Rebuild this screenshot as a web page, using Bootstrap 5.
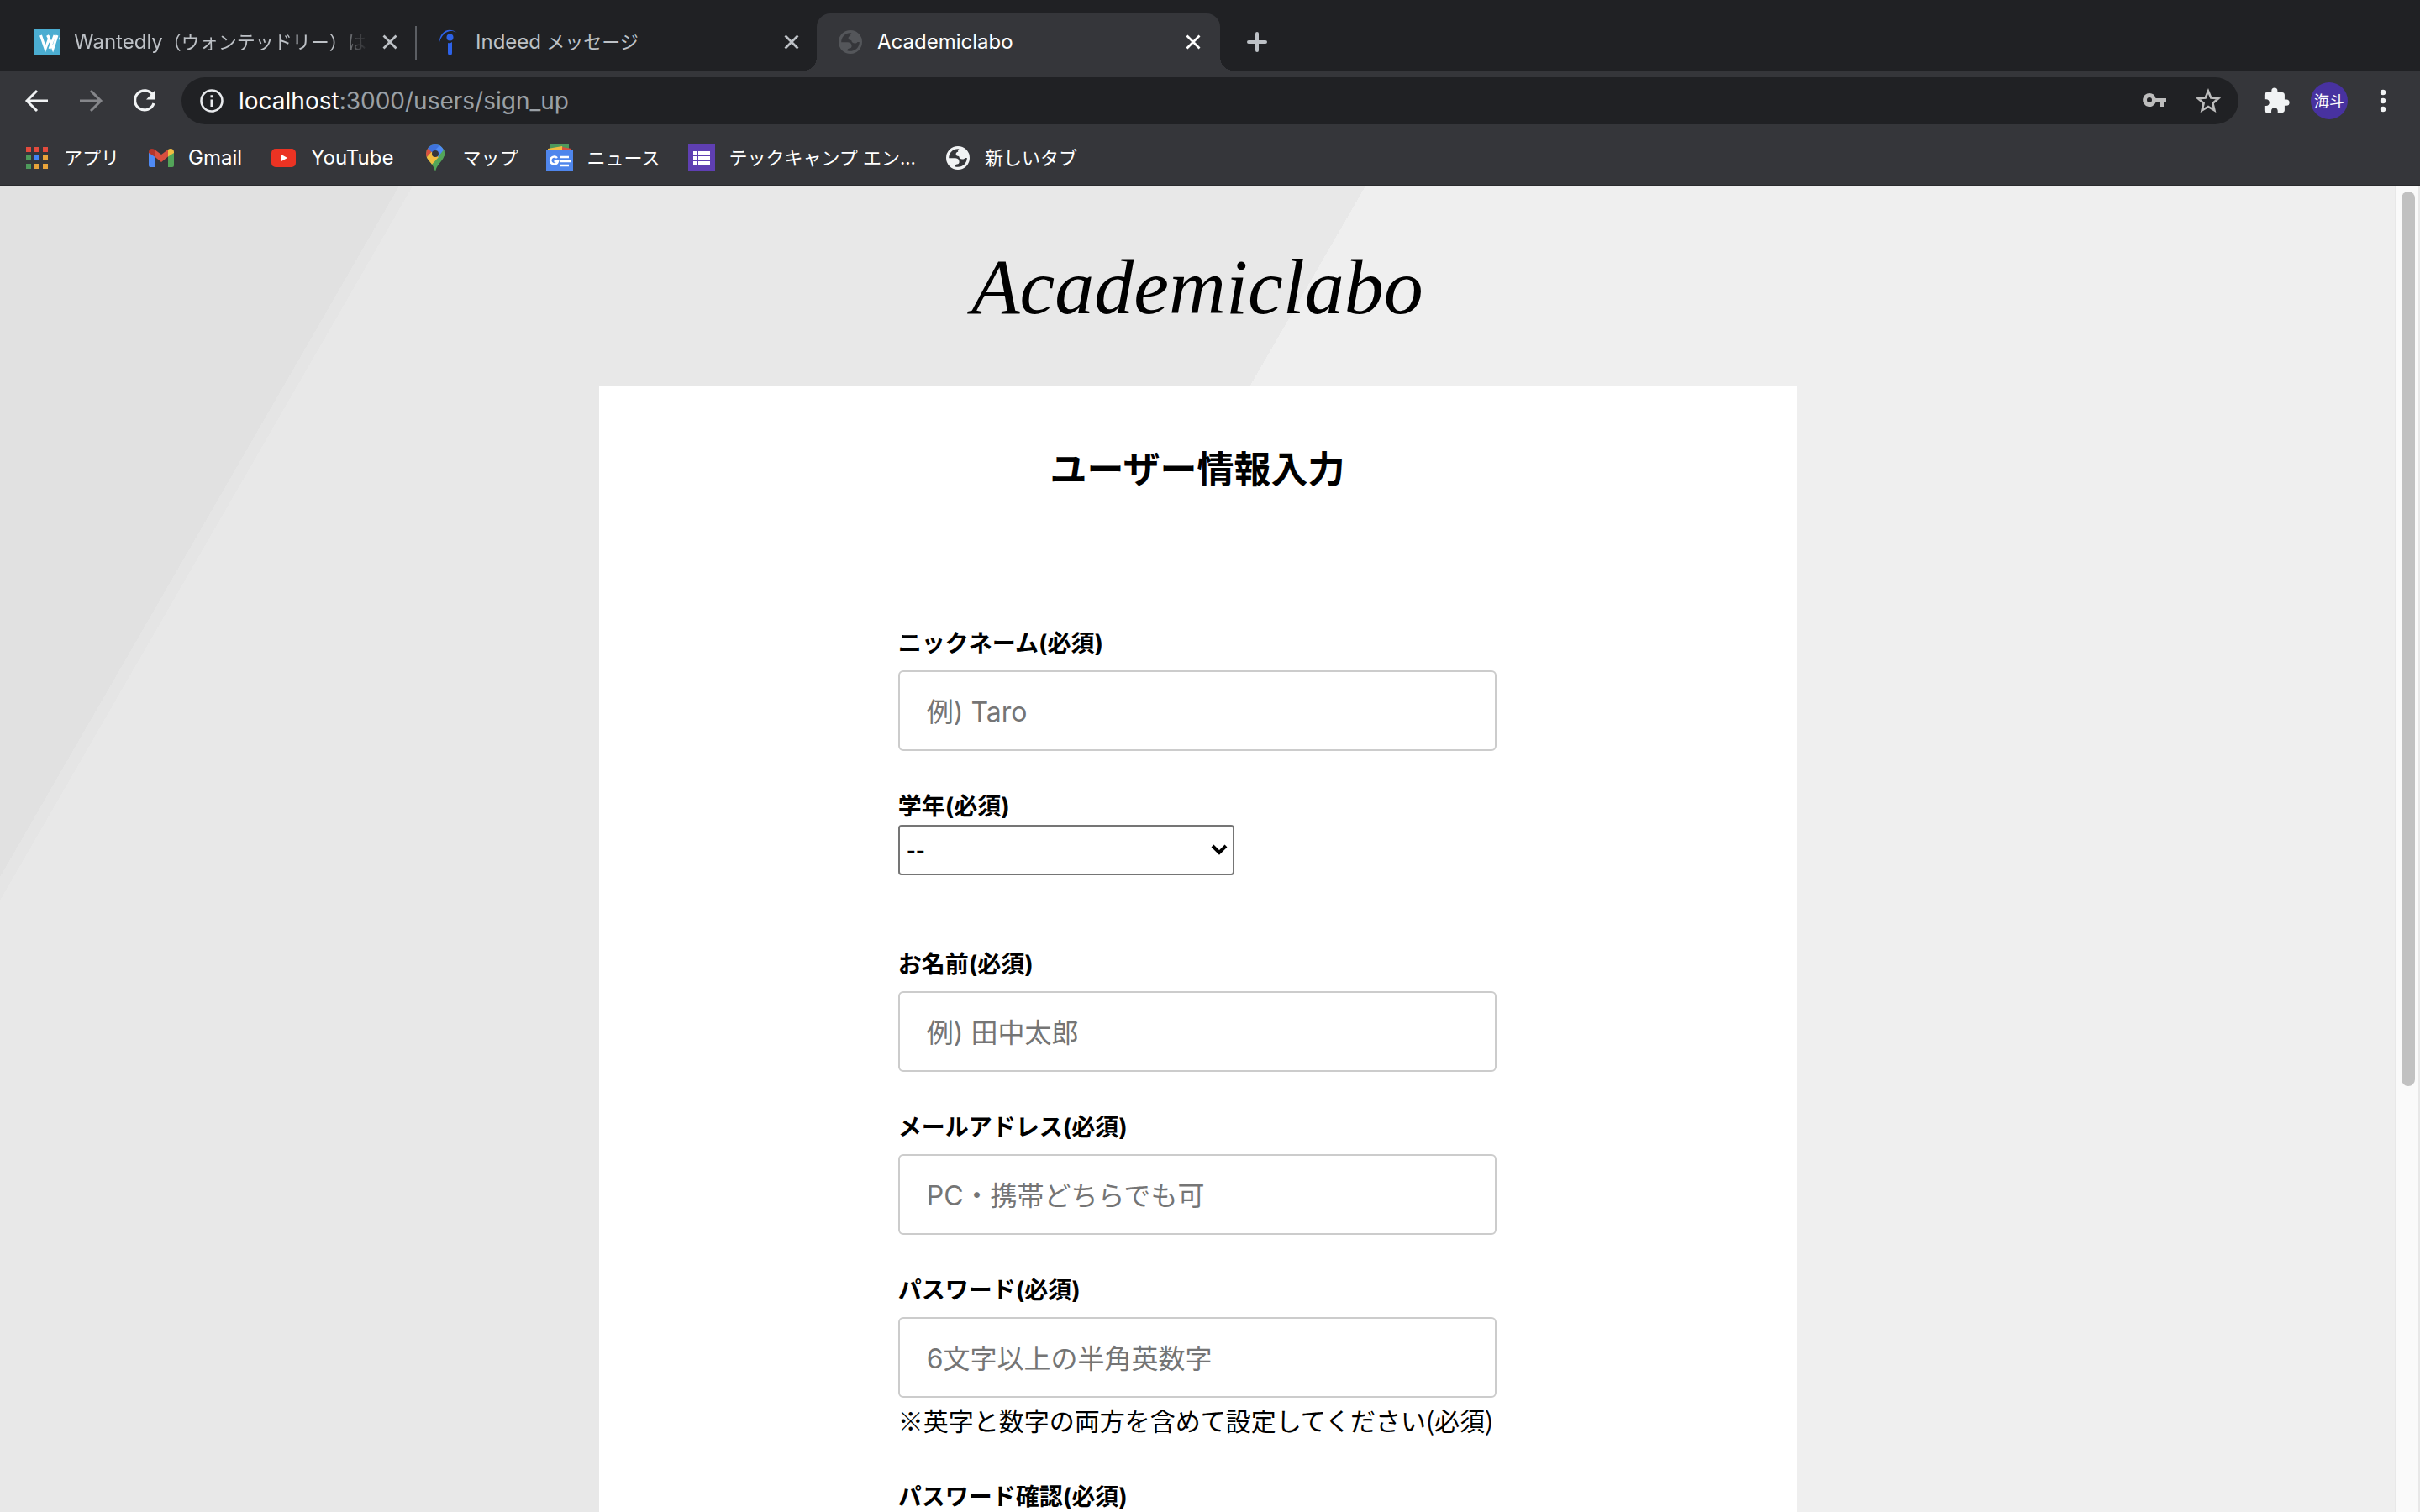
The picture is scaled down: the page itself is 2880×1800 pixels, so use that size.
<!DOCTYPE html>
<html lang="ja">
<head>
<meta charset="utf-8">
<meta name="viewport" content="width=device-width, initial-scale=1">
<title>Academiclabo</title>
<link href="https://cdn.jsdelivr.net/npm/bootstrap@5.3.0/dist/css/bootstrap.min.css" rel="stylesheet">
<style>
  :root { --strip: #202124; --bar: #35363a; --ui: #f1f3f4; --dim: #bdc1c6; }
  body { font-family: Inter, "Noto Sans CJK JP", sans-serif; color: #000; background: #efefef; }
  svg { display: block; flex: none; }
  button { font-family: inherit; }
  .plain-btn { background: none; border: 0; padding: 0; color: inherit; display: flex; align-items: center; justify-content: center; }
  .latin { font-size: 24px; }

  /* tab strip */
  .tab-strip { background: var(--strip); height: 84px; padding: 16px 14px 0; }
  .tab-item { width: 478px; padding: 0 18px 0 26px; gap: 16px; color: var(--dim); font-size: 22px; position: relative; }
  .tab-label { flex: 1; min-width: 0; overflow: hidden; white-space: nowrap; }
  .tab-fade { -webkit-mask-image: linear-gradient(90deg, #000 88%, transparent); mask-image: linear-gradient(90deg, #000 88%, transparent); }
  .tab-split::after { content: ""; position: absolute; right: -4px; top: 15px; width: 2px; height: 40px; background: #5b5e63; }
  .tab-active { width: 480px; margin-left: 2px; padding: 0 22px 0 24px; background: var(--bar); color: #fff; border-radius: 16px 16px 0 0; }
  .tab-active::before, .tab-active::after { content: ""; position: absolute; bottom: 0; width: 16px; height: 16px; }
  .tab-active::before { left: -16px; background: radial-gradient(circle at 0 0, transparent 16px, var(--bar) 16px); }
  .tab-active::after { right: -16px; background: radial-gradient(circle at 100% 0, transparent 16px, var(--bar) 16px); }
  .new-tab { width: 56px; margin-left: 16px; color: var(--dim); }

  /* toolbar */
  .tool-row { background: var(--bar); height: 72px; padding: 0 26px 0 28px; color: var(--ui); }
  .tool-nav { gap: 32px; }
  .url-box { background: var(--strip); height: 56px; border-radius: 28px; margin: 0 28px; padding: 0 20px 0 22px; gap: 18px; }
  .url-text { font-size: 28px; color: #9aa0a6; }
  .url-text b { font-weight: 400; color: #fff; }
  .url-tools { gap: 32px; color: #bdbdbd; }
  .avatar { width: 44px; height: 44px; border-radius: 50%; background: #4832a0; color: #fff; font-size: 18px; }

  /* bookmarks */
  .mark-row { background: var(--bar); height: 66px; padding: 0 28px; gap: 34px; border-bottom: 2px solid #292a2d; }
  .mark-link { color: #fff; font-size: 22px; gap: 16px; text-decoration: none; white-space: nowrap; }

  /* page */
  .page-area { background: linear-gradient(120deg, #e1e1e1 411px, #e5e5e5 411px 425px, #e8e8e8 425px 1407px, #efefef 1407px); }
  .brand-name { font-family: "Liberation Serif", serif; font-style: italic; font-size: 94px; line-height: 238px; margin: 0; text-align: center; }
  .brand-name a { color: #000; text-decoration: none; }
  .form-sheet { width: 50%; background: #fff; padding-top: 66px; }
  .form-title { font-size: 44px; font-weight: 700; line-height: 66px; margin: 0 0 154px; text-align: center; }
  .form-body { width: 50%; }
  .entry { margin-bottom: 46px; }
  .entry-label { display: block; font-size: 28px; font-weight: 700; line-height: 40px; margin-bottom: 12px; }
  .entry-input { display: block; width: 100%; height: 96px; border: 2px solid #ccc; border-radius: 6px; background: #fff; font-size: 32px; padding: 3px 32px 0; color: #000; box-shadow: none; }
  .entry-input::placeholder { color: #757575; opacity: 1; }
  .entry-select-wrap { margin-bottom: 86px; }
  .entry-select-wrap .entry-label { margin-bottom: 2px; }
  .entry-select { display: block; width: 400px; max-width: 100%; height: 60px; border: 2px solid #757575; border-radius: 4px; font-size: 24px; font-weight: 500; padding: 2px 8px 0; color: #000; appearance: none;
    background: #fff url("data:image/svg+xml,%3Csvg xmlns='http://www.w3.org/2000/svg' width='20' height='14'%3E%3Cpath d='M2 2l8 8 8-8' fill='none' stroke='%23000' stroke-width='4'/%3E%3C/svg%3E") no-repeat right 6px center; }
  .entry-note { font-family: "Noto Sans CJK JP", sans-serif; font-size: 30px; line-height: 52px; margin: 0; white-space: nowrap; }

  .scroll-track { width: 30px; background: #fafafa; border-left: 2px solid #e8e8e8; border-right: 2px solid #e8e8e8; padding: 6px 4px 6px 6px; }
  .scroll-thumb { height: 68%; background: #c1c1c1; border-radius: 8px; }
</style>
</head>
<body class="vh-100 d-flex flex-column overflow-hidden">
<svg width="0" height="0" class="position-absolute" aria-hidden="true">
  <symbol id="i-close" viewBox="0 0 20 20"><path d="M2.500 2.500l15 15M17.500 2.500l-15 15" stroke="currentColor" stroke-width="2.800" fill="none"/></symbol>
  <symbol id="i-globe" viewBox="0 0 28 28"><path fill="currentColor" fill-rule="evenodd" d="M14 0a14 14 0 1 0 0 28a14 14 0 0 0 0-28zM15.500 3.500c-1.300.8-1.600 2-1.300 3.200-1.800.3-2.600 1.300-2.600 2.600 0 1.800 1.200 2.700 3.600 2.800.3 2.200 1.600 3.400 4 3.400 1.600 0 2.600-.5 3.300-1.500h2.300c0 6-4.800 10.800-10.800 10.800-1.400 0-2.500-.2-3.700-.6.2-1.800 1.200-2.500 2.700-2.600 1.700-.2 2.600-1.200 2.600-2.800 0-2.600-1.500-4.300-4.600-4.500H3.200C3.200 8 8 3.200 14 3.200z"/></symbol>
</svg>

<header>
  <div class="tab-strip d-flex">
    <div class="tab-item tab-split d-flex align-items-center">
      <svg width="32" height="32" viewBox="0 0 32 32"><path fill="#4badd1" d="M0 0h32v32H0z"/><path d="M8.500 8l5.500 16 4.500-12 4.500 12L28 8M16.500 8l2 4M25 8l-6 16" stroke="#fff" stroke-width="3" fill="none"/><path d="M32 8v8l-2-4z" fill="#fff"/></svg>
      <span class="tab-label tab-fade"><span class="latin">Wantedly</span>（ウォンテッドリー）は</span>
      <button class="plain-btn" type="button" aria-label="閉じる"><svg width="20" height="20"><use href="#i-close"/></svg></button>
    </div>
    <div class="tab-item d-flex align-items-center">
      <svg width="32" height="32" viewBox="0 0 32 32"><path d="M5 16C5 5 15-3 26 5 16 0 9 5 5 16z" fill="#2d62e8"/><circle cx="17.500" cy="10.500" r="4" fill="#2d62e8"/><path d="M15 17q2.500 1 5-1v13a2.500 2.500 0 0 1-5 0z" fill="#2d62e8"/></svg>
      <span class="tab-label"><span class="latin">Indeed</span> メッセージ</span>
      <button class="plain-btn" type="button" aria-label="閉じる"><svg width="20" height="20"><use href="#i-close"/></svg></button>
    </div>
    <div class="tab-item tab-active d-flex align-items-center">
      <svg width="32" height="28" color="#54565a"><use href="#i-globe"/></svg>
      <span class="tab-label"><span class="latin">Academiclabo</span></span>
      <button class="plain-btn" type="button" aria-label="閉じる"><svg width="20" height="20"><use href="#i-close"/></svg></button>
    </div>
    <button class="plain-btn new-tab" type="button" aria-label="新しいタブ"><svg width="24" height="24" viewBox="0 0 24 24"><path d="M12 2v20M2 12h20" stroke="currentColor" stroke-width="4" stroke-linecap="round"/></svg></button>
  </div>

  <div class="tool-row d-flex align-items-center">
    <div class="tool-nav d-flex">
      <button class="plain-btn" type="button" aria-label="戻る"><svg width="32" height="32" viewBox="0 0 32 32"><path d="M16 4L4 16l12 12M4 16h25" stroke="currentColor" stroke-width="3" fill="none"/></svg></button>
      <button class="plain-btn" type="button" aria-label="進む"><svg width="32" height="32" viewBox="0 0 32 32"><path d="M16 4l12 12-12 12M28 16H3" stroke="#85868a" stroke-width="3" fill="none"/></svg></button>
      <button class="plain-btn" type="button" aria-label="再読み込み"><svg width="32" height="32" viewBox="0 0 32 32"><path d="M26 9.500A11.500 11.500 0 1 0 27 19" stroke="currentColor" stroke-width="3.200" fill="none"/><path d="M29 3v11.500H18z" fill="currentColor"/></svg></button>
    </div>
    <div class="url-box d-flex align-items-center flex-grow-1">
      <svg width="28" height="28" viewBox="0 0 28 28"><circle cx="14" cy="14" r="12.500" stroke="#e8eaed" stroke-width="2.600" fill="none"/><path d="M14 12.500V21M14 7.200v3" stroke="#e8eaed" stroke-width="3"/></svg>
      <span class="url-text flex-grow-1"><b>localhost</b>:3000/users/sign_up</span>
      <div class="url-tools d-flex">
        <button class="plain-btn" type="button" aria-label="パスワード"><svg width="32" height="32" viewBox="0 0 32 32"><path fill="currentColor" fill-rule="evenodd" d="M10 7a8 8 0 1 0 7.500 11H23v5h4v-5h3v-5H17.500A8 8 0 0 0 10 7zm0 5a3 3 0 1 1 0 6 3 3 0 0 1 0-6z"/></svg></button>
        <button class="plain-btn" type="button" aria-label="ブックマーク"><svg width="32" height="32" viewBox="0 0 32 32"><path d="M16 4.500l3.300 8 8.700.700-6.600 5.700 2 8.500L16 22.900l-7.400 4.500 2-8.500L4 13.200l8.700-.700z" stroke="currentColor" stroke-width="2.600" fill="none"/></svg></button>
      </div>
    </div>
    <div class="d-flex align-items-center gap-4">
      <button class="plain-btn" type="button" aria-label="拡張機能"><svg width="34" height="34" viewBox="0 0 24 24"><path fill="currentColor" d="M20.500 11H19V7c0-1.100-.9-2-2-2h-4V3.500a2.500 2.500 0 0 0-5 0V5H4c-1.100 0-1.990.9-1.990 2v3.800H3.500c1.490 0 2.700 1.210 2.700 2.700s-1.210 2.700-2.700 2.700H2V20c0 1.100.9 2 2 2h3.800v-1.500c0-1.490 1.210-2.700 2.700-2.700s2.700 1.210 2.700 2.700V22H17c1.100 0 2-.9 2-2v-4h1.500a2.500 2.500 0 0 0 0-5z"/></svg></button>
      <button class="plain-btn avatar" type="button">海斗</button>
      <button class="plain-btn" type="button" aria-label="メニュー"><svg width="36" height="32" viewBox="0 0 36 32"><g fill="currentColor"><circle cx="18" cy="6" r="3.200"/><circle cx="18" cy="16" r="3.200"/><circle cx="18" cy="26" r="3.200"/></g></svg></button>
    </div>
  </div>

  <nav class="mark-row d-flex align-items-center" aria-label="ブックマーク">
    <a class="mark-link d-flex align-items-center" href="#"><svg width="32" height="32" viewBox="0 0 32 32"><path fill="#e34b3d" d="M3 3h6v6H3zM13 3h6v6h-6zM23 3h6v6h-6z"/><path fill="#4e9a5b" d="M3 13h6v6H3zM3 23h6v6H3z"/><path fill="#4285f4" d="M13 13h6v6h-6z"/><path fill="#e8a33a" d="M23 13h6v6h-6zM13 23h6v6h-6zM23 23h6v6h-6z"/></svg>アプリ</a>
    <a class="mark-link d-flex align-items-center" href="#"><svg width="32" height="32" viewBox="0 0 32 32"><path fill="#4f8bf5" d="M1 9l7 5v13H3q-2 0-2-2z"/><path fill="#53a559" d="M31 9l-7 5v13h5q2 0 2-2z"/><path fill="#d94f3f" d="M8 6l8 6 8-6v8.500l-8 6.500-8-6.500z"/><path fill="#b5352b" d="M1 9c0-4 4-5 7-3v8.500L1 10z"/><path fill="#f2bd42" d="M31 9c0-4-4-5-7-3v8.500l7-4.500z"/></svg><span class="latin">Gmail</span></a>
    <a class="mark-link d-flex align-items-center" href="#"><svg width="32" height="32" viewBox="0 0 32 32"><rect x="1" y="5" width="29" height="22" rx="5" fill="#eb3323"/><path d="M12 11.500v9l8-4.500z" fill="#fff"/></svg><span class="latin">YouTube</span></a>
    <a class="mark-link d-flex align-items-center" href="#"><svg width="32" height="32" viewBox="0 0 32 32"><clipPath id="pin"><path d="M16 0a11 11 0 0 1 11 11c0 8-8 10-11 21C13 21 5 19 5 11A11 11 0 0 1 16 0z"/></clipPath><g clip-path="url(#pin)"><path fill="#53a559" d="M0 0h32v32H0z"/><path fill="#f2bd42" d="M4 17l9-10 7 8-11 12z"/><path fill="#d94f3f" d="M0 3h8l5 4-9 10z"/><path fill="#3f72dc" d="M6 4l4-5h14l-11 11z"/><path fill="#4f8bf5" d="M22 0l6 6-8 9-7-5z"/><path fill="#53a559" d="M27 5v9h-7z"/></g><circle cx="16" cy="11" r="4" fill="#35363a"/></svg>マップ</a>
    <a class="mark-link d-flex align-items-center" href="#"><svg width="32" height="32" viewBox="0 0 32 32"><path fill="#4e9a5b" d="M5 0h22v8H5z"/><path fill="#f2bd42" d="M2 5l17-3 2 6H2z"/><path fill="#d94f3f" d="M19 3l11 2v4H19z"/><path fill="#4f86ec" d="M0 7h32v25H0z"/><path d="M13 16a4.500 4.500 0 1 0 1 4h-4.500M17 15h10M17 20h12M17 25h10" stroke="#fff" stroke-width="2.600" fill="none"/></svg>ニュース</a>
    <a class="mark-link d-flex align-items-center" href="#"><svg width="32" height="32" viewBox="0 0 32 32"><path fill="#5f3fb2" d="M0 0h32v32H0z"/><path fill="#fff" d="M6 8h4v4H6zM12 8h14v4H12zM6 14h4v4H6zM12 14h14v4H12zM6 20h4v4H6zM12 20h14v4H12z"/></svg>テックキャンプ エン...</a>
    <a class="mark-link d-flex align-items-center" href="#"><svg width="32" height="28" color="#f1f3f4"><use href="#i-globe"/></svg>新しいタブ</a>
  </nav>
</header>

<div class="d-flex flex-grow-1 overflow-hidden">
  <main class="page-area flex-grow-1 overflow-hidden">
    <h1 class="brand-name"><a href="#">Academiclabo</a></h1>
    <section class="form-sheet mx-auto">
      <h2 class="form-title">ユーザー情報入力</h2>
      <form class="form-body mx-auto">
        <div class="entry">
          <label class="entry-label" for="nickname">ニックネーム(必須)</label>
          <input class="entry-input" id="nickname" type="text" placeholder="例) Taro">
        </div>
        <div class="entry-select-wrap">
          <label class="entry-label" for="grade">学年(必須)</label>
          <select class="entry-select" id="grade"><option>--</option></select>
        </div>
        <div class="entry">
          <label class="entry-label" for="fullname">お名前(必須)</label>
          <input class="entry-input" id="fullname" type="text" placeholder="例) 田中太郎">
        </div>
        <div class="entry">
          <label class="entry-label" for="email">メールアドレス(必須)</label>
          <input class="entry-input" id="email" type="email" placeholder="PC・携帯どちらでも可">
        </div>
        <div class="entry">
          <label class="entry-label" for="password">パスワード(必須)</label>
          <input class="entry-input" id="password" type="password" placeholder="6文字以上の半角英数字">
          <p class="entry-note">※英字と数字の両方を含めて設定してください(必須)</p>
        </div>
        <div class="entry">
          <label class="entry-label" for="confirm">パスワード確認(必須)</label>
          <input class="entry-input" id="confirm" type="password">
        </div>
      </form>
    </section>
  </main>
  <div class="scroll-track flex-shrink-0" aria-hidden="true"><div class="scroll-thumb"></div></div>
</div>
<script src="https://cdn.jsdelivr.net/npm/bootstrap@5.3.0/dist/js/bootstrap.bundle.min.js"></script>
</body>
</html>
